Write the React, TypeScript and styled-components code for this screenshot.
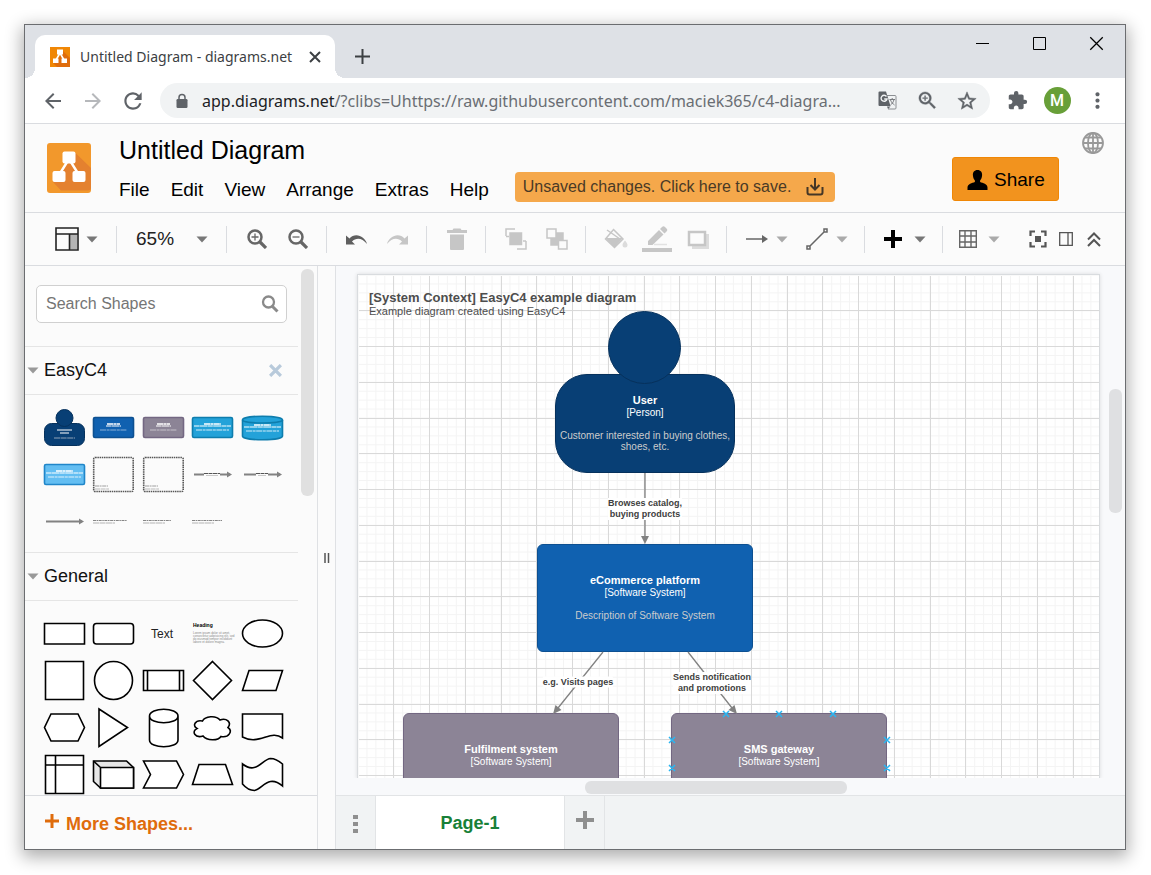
import React from 'react';
import styled, { createGlobalStyle } from 'styled-components';
import {
  MdArrowBack,
  MdArrowForward,
  MdRefresh,
  MdZoomIn,
  MdStarOutline,
  MdExtension,
  MdMoreVert,
} from 'react-icons/md';

const ui = '"Liberation Sans", Arial, sans-serif';
const chrome = '"Noto Sans", "Open Sans", sans-serif';

const GlobalStyle = createGlobalStyle`
  *, *::before, *::after { box-sizing: border-box; }
  body { margin: 0; background: #fff; font-family: ${ui}; color: #000; }
  button, input { font: inherit; color: inherit; }
  button { border: 0; padding: 0; background: none; cursor: pointer; }
  svg { display: block; flex: none; }
`;

/* ---------- browser window ---------- */

const Desktop = styled.div`
  display: flex;
  height: 100vh;
  min-height: 600px;
  padding: 24px 25px 25px 24px;
`;

const Window = styled.div`
  flex: 1;
  min-width: 0;
  display: flex;
  flex-direction: column;
  border: 1px solid #6b6d70;
  background: #fbfbfb;
  box-shadow: 0 5px 16px 2px rgba(0, 0, 0, 0.32);
`;

const TabStrip = styled.div`
  flex: none;
  display: flex;
  height: 53px;
  padding: 10px 0 0 10px;
  background: #dee1e6;
`;

const BrowserTab = styled.div`
  position: relative;
  display: flex;
  align-items: center;
  width: 300px;
  padding: 0 13px 0 15px;
  border-radius: 10px 10px 0 0;
  background: #fff;
  font: 14px/20px ${chrome};
  color: #3c4043;

  &::before,
  &::after {
    content: '';
    position: absolute;
    bottom: 0;
    width: 10px;
    height: 10px;
  }
  &::before {
    right: 100%;
    background: radial-gradient(circle at 0 0, transparent 10px, #fff 10px);
  }
  &::after {
    left: 100%;
    background: radial-gradient(circle at 100% 0, transparent 10px, #fff 10px);
  }
`;

const TabTitle = styled.span`
  flex: 1;
  margin-left: 10px;
  white-space: nowrap;
`;

const GlyphButton = styled.button`
  display: grid;
  place-items: center;
  width: 15px;
  height: 20px;
`;

const NewTab = styled(GlyphButton)`
  width: 30px;
  height: 43px;
  margin-left: 12px;
`;

const Caption = styled.div`
  display: flex;
  margin: -10px 0 0 auto;
`;

const CaptionButton = styled(GlyphButton)`
  width: 57px;
  height: 37px;
`;

const AddressBar = styled.div`
  flex: none;
  display: flex;
  align-items: center;
  gap: 7px;
  height: 46px;
  padding: 0 8px;
  border-bottom: 1px solid #dadce0;
  background: #fff;
  color: #5f6368;
`;

const ButtonRow = styled.div`
  display: flex;
  align-items: center;
`;

const NavButton = styled.button<{ $dim?: boolean }>`
  display: grid;
  place-items: center;
  width: 40px;
  height: 35px;
  color: ${(p) => (p.$dim ? '#b6b8bb' : '#5f6368')};

  path[fill='none'][d^='M0 0h24'] {
    stroke: none;
  }
`;

const Omnibox = styled.div`
  flex: 1;
  min-width: 0;
  display: flex;
  align-items: center;
  height: 35px;
  padding: 0 3px 0 16px;
  border-radius: 18px;
  background: #f1f3f4;
`;

const Url = styled.div`
  flex: 1;
  min-width: 0;
  margin-left: 14px;
  overflow: hidden;
  text-overflow: ellipsis;
  white-space: nowrap;
  font: 16px/24px ${chrome};
  color: #6a6e73;

  b {
    font-weight: 400;
    color: #202124;
  }
`;

const Avatar = styled.span`
  display: grid;
  place-items: center;
  width: 27px;
  height: 27px;
  border-radius: 50%;
  background: #689f38;
  color: #fff;
  font: 500 16px/27px Roboto, sans-serif;
`;

/* ---------- application header ---------- */

const Header = styled.header`
  flex: none;
  display: flex;
  align-items: flex-start;
  height: 89px;
  padding: 0 21px 0 22px;
  border-bottom: 1px solid #dadce0;
`;

const LogoLink = styled.a`
  margin: 19px 28px 0 0;
`;

const HeaderMain = styled.div`
  display: flex;
  flex-direction: column;
  gap: 7px;
  padding-top: 11px;
`;

const DocTitle = styled.h1`
  margin: 0;
  font-size: 25px;
  font-weight: 400;
  line-height: 30px;
`;

const MenuRow = styled.div`
  display: flex;
  align-items: flex-start;
  gap: 26px;
`;

const Menu = styled.nav`
  display: flex;
  gap: 21px;
  padding-top: 4px;
`;

const MenuButton = styled.button`
  font-size: 19px;
  line-height: 28px;
`;

const SaveNotice = styled.button`
  display: flex;
  align-items: center;
  justify-content: space-between;
  width: 320px;
  height: 30px;
  padding: 0 11px 0 8px;
  border-radius: 4px;
  background: #f5a84b;
  color: #4a3a26;
  font-size: 16px;
  line-height: 30px;
  white-space: nowrap;
`;

const ShareButton = styled.button`
  display: flex;
  align-items: center;
  gap: 6px;
  width: 107px;
  height: 44px;
  margin: 33px 23px 0 auto;
  padding: 1px 14px 0;
  border: 1px solid #f08705;
  border-radius: 3px;
  background: #f2931e;
  font-size: 19px;
`;

const LanguageButton = styled.button`
  margin-top: 8px;
`;

/* ---------- toolbar ---------- */

const Toolbar = styled.div`
  flex: none;
  display: flex;
  align-items: center;
  height: 53px;
  padding: 0 17px 0 20px;
  border-bottom: 1px solid #dadce0;
`;

const ToolButton = styled.button`
  display: grid;
  place-items: center;
  width: 41px;
  height: 36px;
`;

const DropButton = styled.button`
  display: flex;
  align-items: center;
  justify-content: space-between;
  width: 60px;
  height: 36px;
  padding: 0 8px 0 10px;
`;

const FormatButton = styled(DropButton)`
  width: 63px;
  padding-right: 10px;
`;

const ZoomSelect = styled(DropButton)`
  width: 92px;
  padding-right: 10px;
  font-size: 19px;
  color: #222;
`;

const TableButton = styled(DropButton)`
  width: 56px;
  padding-left: 7px;
`;

const Divider = styled.span`
  width: 1px;
  height: 27px;
  margin: 0 9px 0 8px;
  background: #dadce0;
`;

const ViewTools = styled.div`
  display: flex;
  margin-left: auto;
`;

const ViewButton = styled(ToolButton)`
  width: 28px;
`;

/* ---------- workspace ---------- */

const Workspace = styled.div`
  flex: 1;
  min-height: 0;
  display: flex;
`;

const Sidebar = styled.aside`
  flex: none;
  display: flex;
  flex-direction: column;
  width: 293px;
  border-right: 1px solid #dfe1e4;
`;

const SidebarScroll = styled.div`
  flex: 1;
  min-height: 0;
  display: flex;
  overflow: hidden;
`;

const Library = styled.div`
  width: 273px;
`;

const SearchBox = styled.label`
  display: flex;
  align-items: center;
  height: 38px;
  margin: 19px 11px 23px;
  padding: 0 7px 0 9px;
  border: 1px solid #d0d0d0;
  border-radius: 5px;
  background: #fff;
`;

const SearchInput = styled.input`
  flex: 1;
  min-width: 0;
  padding: 0;
  border: 0;
  outline: 0;
  background: none;
  font-size: 16px;

  &::placeholder {
    color: #757575;
    opacity: 1;
  }
`;

const SectionHeader = styled.div`
  display: flex;
  align-items: center;
  justify-content: space-between;
  height: 49px;
  padding: 0 15px 0 2px;
  border: solid #e5e5e5;
  border-width: 1px 0;
`;

const SectionToggle = styled.button`
  display: flex;
  align-items: center;
  gap: 5px;
  font-size: 18px;
  color: #111;
`;

const Palette = styled.div`
  display: grid;
  grid-template-columns: repeat(5, 1fr);
  grid-auto-rows: 47px;
  padding: 9px 11px 7px 15px;
`;

const ShapeButton = styled.button`
  display: flex;
  font-size: 12px;
`;

const SideThumb = styled.div`
  width: 13px;
  height: 227px;
  margin: 3px 0 0 3px;
  border-radius: 6px;
  background: #e0e0e0;
`;

const MoreShapes = styled.button`
  display: flex;
  align-items: center;
  gap: 7px;
  height: 54px;
  padding: 3px 0 0 20px;
  border-top: 1px solid #dadce0;
  color: #df6c0c;
  font-size: 18px;
  font-weight: 700;

  svg {
    margin-bottom: 7px;
  }
`;

const Splitter = styled.div`
  flex: none;
  display: grid;
  place-items: center;
  width: 18px;
  border-right: 1px solid #dfe1e4;
`;

const Editor = styled.main`
  flex: 1;
  min-width: 0;
  display: flex;
  flex-direction: column;
`;

const Stage = styled.div`
  flex: 1;
  min-height: 0;
  display: grid;
  grid-template: minmax(0, 1fr) 17px / minmax(0, 1fr) 19px;
  background: #f8f9fb;
`;

const Viewport = styled.div`
  display: flex;
  overflow: hidden;
  padding: 9px 7px 0 22px;
`;

const Paper = styled.div`
  position: relative;
  flex: 1;
  overflow: hidden;
  background: #fff;
`;

const PaperEdge = styled.div`
  flex: 1;
  display: flex;
  box-shadow: 0 0 0 1px #d9dcdf, 0 0 4px 1px rgba(0, 0, 0, 0.12);
`;

const VerticalThumb = styled.div`
  width: 13px;
  height: 124px;
  margin: 123px 0 0 3px;
  border-radius: 6px;
  background: #dfe0e2;
`;

const HorizontalThumb = styled.div`
  width: 34%;
  height: 13px;
  margin: 3px 0 0 calc(32% + 3px);
  border-radius: 6px;
  background: #dfe0e2;
`;

const PageBar = styled.div`
  flex: none;
  display: flex;
  height: 54px;
  border-top: 1px solid #e2e4e6;
  background: #f1f3f4;
`;

const PageBarButton = styled.button`
  display: grid;
  place-items: center;
  width: 40px;
  padding-top: 3px;
  border-right: 1px solid #e2e4e6;
`;

const AddPage = styled(PageBarButton)`
  padding: 0 0 6px;
`;

const PageTab = styled.button`
  width: 189px;
  padding-top: 2px;
  border-right: 1px solid #e2e4e6;
  background: #fff;
  color: #188038;
  font-size: 18px;
  font-weight: 700;
`;

/* ---------- diagram ---------- */

const Drawing = styled.svg`
  position: absolute;
  inset: 0;
  width: 100%;
  height: 100%;
`;

type NodeProps = { $x: number; $y: number; $fill: string; $line: string; $person?: boolean };

const Node = styled.div<NodeProps>`
  position: absolute;
  left: ${(p) => p.$x}px;
  top: ${(p) => p.$y}px;
  width: ${(p) => (p.$person ? 180 : 216)}px;
  height: ${(p) => (p.$person ? 99 : 108)}px;
  padding-top: ${(p) => (p.$person ? 19 : 29)}px;
  display: flex;
  flex-direction: column;
  border: 1px solid ${(p) => p.$line};
  border-radius: ${(p) => (p.$person ? 32 : 6)}px;
  background: ${(p) => p.$fill};
  color: #fff;
  font-size: 10px;
  line-height: 12px;
  text-align: center;
`;

const PersonHead = styled.div`
  position: absolute;
  left: 250px;
  top: 36px;
  width: 73px;
  height: 73px;
  border: 1px solid #06315c;
  border-radius: 50%;
  background: #083f75;
`;

const NodeName = styled.strong`
  font-size: 11px;
  line-height: 13px;
`;

const NodeText = styled.span`
  margin-top: 11px;
  line-height: 11px;
  color: #ccc;
`;

const EdgeLabel = styled.div<{ $x: number; $y: number }>`
  position: absolute;
  left: ${(p) => p.$x}px;
  top: ${(p) => p.$y}px;
  transform: translate(-50%, -50%);
  background: #fff;
  color: #404040;
  font-size: 9px;
  font-weight: 700;
  line-height: 11px;
  text-align: center;
  white-space: nowrap;
`;

const DiagramTitle = styled.div`
  position: absolute;
  left: 11px;
  top: 15px;
  color: #4d4d4d;
  font-size: 11px;
  line-height: 13px;

  strong {
    display: block;
    font-size: 13px;
    line-height: 15px;
  }
`;

/* ---------- icons ---------- */

const Caret = ({ color = '#777' }: { color?: string }) => (
  <svg width="12" height="7" viewBox="0 0 12 7">
    <path d="M.5.5h11L6 6.5z" fill={color} />
  </svg>
);

const Cross = ({ size, width, color }: { size: number; width: number; color: string }) => (
  <svg width={size} height={size} viewBox="0 0 12 12">
    <path d="M1 1l10 10M11 1L1 11" stroke={color} strokeWidth={width} />
  </svg>
);

const Plus = ({ size, width, color }: { size: number; width: number; color: string }) => (
  <svg width={size} height={size} viewBox={`0 0 ${size} ${size}`}>
    <path d={`M0 ${size / 2}h${size}M${size / 2} 0v${size}`} stroke={color} strokeWidth={width} />
  </svg>
);

const Favicon = () => (
  <svg width="20" height="20" viewBox="0 0 20 20">
    <path fill="#f08705" d="M0 0h20v20H0z" />
    <path fill="#df6c0c" d="M12 3l8 8v9H7l-4-4 7-7z" />
    <path d="M10 6L6 13M10 6l4 7" stroke="#fff" strokeWidth="1.6" />
    <path fill="#fff" d="M7 2.500h6v5H7zM3 11.500h5.500v4.500H3zM11.500 11.500H17v4.500h-5.500z" />
  </svg>
);

const Lock = () => (
  <svg width="12" height="16" viewBox="0 0 12 16">
    <rect x=".5" y="6" width="11" height="9" rx="1.200" fill="#5f6368" />
    <path d="M3 7V4.500a3 3 0 0 1 6 0V7" fill="none" stroke="#5f6368" strokeWidth="1.500" />
  </svg>
);

const Translate = () => (
  <svg width="19" height="19" viewBox="0 0 19 19" fill="none">
    <path d="M8 4.500h9a1 1 0 0 1 1 1V17a1 1 0 0 1-1 1H10" stroke="#8b8e92" />
    <path d="M1.500.500h6.500L12.500 15h-11a1 1 0 0 1-1-1V1.500a1 1 0 0 1 1-1z" fill="#5f6368" />
    <path d="M9 15.500h3.500L10 18z" fill="#5f6368" />
    <path d="M8.500 5.500A3 3 0 1 0 9 8H6.200" stroke="#f1f3f4" strokeWidth="1.400" />
    <path d="M11.500 8.500h5.500M14.200 7v1.500M16 8.500c-.5 2.500-2 4.500-3.500 5.500M12.500 9c1 2.500 2.500 4 4 5" stroke="#77797d" />
  </svg>
);

const Logo = () => (
  <svg width="44" height="50" viewBox="0 0 44 50">
    <rect width="44" height="50" rx="3" fill="#f2982c" />
    <path fill="#e4812f" d="M28 9.500l16 15.500v19.500a3 3 0 0 1-3 3H14L6 39l12-16z" />
    <path d="M22 16L12 32M22 16l10 16" stroke="#fff" strokeWidth="2.400" />
    <rect x="15.500" y="8.500" width="13" height="12" rx="2" fill="#fff" />
    <rect x="5.500" y="28" width="13" height="11" rx="2" fill="#fff" />
    <rect x="25.500" y="28" width="13" height="11" rx="2" fill="#fff" />
  </svg>
);

const Download = () => (
  <svg width="18" height="18" viewBox="0 0 18 18" fill="none" stroke="#453626" strokeWidth="2">
    <path d="M1.500 9v5.500a2 2 0 0 0 2 2h11a2 2 0 0 0 2-2V9M9 0v11M4.500 7L9 11.500 13.500 7" />
  </svg>
);

const Person = () => (
  <svg width="21" height="20" viewBox="0 0 21 20">
    <path d="M10.500 0c3.200 0 4.800 2.300 4.600 5.200-.2 2.500-1 4.200-2 5.300v1.600c2.800 1.200 7.400 1.900 7.400 5.400V20H.5v-2.500c0-3.500 4.600-4.200 7.400-5.400v-1.600c-1-1.100-1.800-2.800-2-5.300C5.700 2.300 7.300 0 10.500 0z" />
  </svg>
);

const Globe = () => (
  <svg width="22" height="22" viewBox="0 0 22 22" fill="none" stroke="#999" strokeWidth="1.800">
    <circle cx="11" cy="11" r="10" />
    <ellipse cx="11" cy="11" rx="5" ry="10" />
    <path d="M11 1v20M1 11h20M3 5.500h16M3 16.500h16" />
  </svg>
);

const FormatPanel = () => (
  <svg width="24" height="24" viewBox="0 0 24 24">
    <path fill="#b5b5b5" d="M15 7h7v15h-7z" />
    <path d="M1 1h22v22H1zM1 7h22M14.500 7v16" fill="none" stroke="#222" strokeWidth="1.600" />
  </svg>
);

const Lens = ({ plus }: { plus?: boolean }) => (
  <svg width="20" height="20" viewBox="0 0 20 20" fill="none" stroke="#666">
    <circle cx="8" cy="8" r="6.500" strokeWidth="2.500" />
    <path d="M13 13l6 6" strokeWidth="3.200" />
    <path d={plus ? 'M4.500 8h7M8 4.500v7' : 'M4.500 8h7'} strokeWidth="1.300" />
  </svg>
);

const Turn = ({ forward, color }: { forward?: boolean; color: string }) => (
  <svg width="21" height="11" viewBox="0 0 21 11">
    <path
      fill={color}
      d={
        forward
          ? 'M21 1.500V10.500h-9L15 7.500C11 3.500 5 3.500 0 10 2 2 12-2 17.500 4.500z'
          : 'M0 1.500V10.500h9L6 7.500C10 3.500 16 3.500 21 10 19 2 9-2 3.500 4.500z'
      }
    />
  </svg>
);

const Trash = () => (
  <svg width="20" height="22" viewBox="0 0 20 22" fill="#c6c6c6">
    <path d="M0 2h5.500l1-1.500h7l1 1.500H20v3H0zM3 6.500h14V21a1 1 0 0 1-1 1H4a1 1 0 0 1-1-1z" />
  </svg>
);

const ToFront = () => (
  <svg width="22" height="22" viewBox="0 0 22 22" fill="none" stroke="#c6c6c6" strokeWidth="1.500">
    <path fill="#c6c6c6" d="M5 5h11.500v11.500H5z" />
    <path d="M1 8V1h9M21 13v8h-9M21 13h-3M1 8.500h3" />
  </svg>
);

const ToBack = () => (
  <svg width="22" height="22" viewBox="0 0 22 22" stroke="#c6c6c6" strokeWidth="1.500">
    <path fill="#c6c6c6" d="M5 5h12v12H5z" />
    <path fill="#fbfbfb" d="M1 1h9v9H1zM12.500 12.500h8.500V21h-8.500z" />
  </svg>
);

const FillIcon = () => (
  <svg width="24" height="22" viewBox="0 0 24 22" fill="#c6c6c6">
    <path d="M3 2l13 9" stroke="#c6c6c6" strokeWidth="1.500" />
    <path d="M9.500 1.500l9.500 9.500-8.500 8.500L1.500 11z" fill="none" stroke="#c6c6c6" strokeWidth="1.500" />
    <path d="M1.500 10h17.500l-8.500 9.500z" />
    <path d="M21 12.500c1.500 2 2.500 3 2.500 4.500a2.500 2.500 0 0 1-5 0c0-1.500 1-2.500 2.500-4.500z" fill="#dcdcdc" />
  </svg>
);

const PenIcon = () => (
  <svg width="30" height="28" viewBox="0 0 30 28" fill="#c6c6c6">
    <path d="M6 20v-4L17 5l4.500 4.500L10.500 20zM18 4l2-2c1-1 2-1 3 0l1.500 1.500c1 1 1 2 0 3l-2 2z" />
    <path d="M12 19.500h13" stroke="#e2e2e2" strokeWidth="1.500" />
    <path d="M0 23h30v4H0z" />
  </svg>
);

const ShadowIcon = () => (
  <svg width="22" height="19" viewBox="0 0 22 19">
    <path fill="#dcdcdc" d="M5 4h17v15H5z" />
    <path fill="#fbfbfb" stroke="#c6c6c6" strokeWidth="2.500" d="M2 2h16v13H2z" />
  </svg>
);

const ArrowIcon = () => (
  <svg width="22" height="10" viewBox="0 0 22 10">
    <path d="M0 5h18" stroke="#666" strokeWidth="1.500" />
    <path fill="#666" d="M16 1l6 4-6 4z" />
  </svg>
);

const WaypointIcon = () => (
  <svg width="22" height="22" viewBox="0 0 22 22" fill="none" stroke="#666" strokeWidth="1.500">
    <path d="M1 18h3v3H1zM18 1h3v3h-3zM4 18L18 4" />
  </svg>
);

const GridIcon = () => (
  <svg width="18" height="18" viewBox="0 0 18 18" fill="none" stroke="#666" strokeWidth="1.400">
    <path d="M.7.700h16.600v16.600H.7zM6 .7v16.600M12 .7v16.600M.7 6h16.600M.7 12h16.600" />
  </svg>
);

const FitIcon = () => (
  <svg width="18" height="18" viewBox="0 0 18 18" fill="none" stroke="#555" strokeWidth="2.200">
    <path d="M1.500 6V1.500H6M12 1.500h4.500V6M16.500 12v4.500H12M6 16.500H1.500V12" />
    <path fill="#555" stroke="none" d="M6 6h6v6H6z" />
  </svg>
);

const PanelIcon = () => (
  <svg width="14" height="14" viewBox="0 0 14 14" fill="none" stroke="#555" strokeWidth="1.300">
    <path d="M.7.700h12.600v12.600H.7zM9 .7v12.600" />
  </svg>
);

const CollapseIcon = () => (
  <svg width="14" height="15" viewBox="0 0 14 15" fill="none" stroke="#555" strokeWidth="2">
    <path d="M1 7.500l6-6 6 6M1 14l6-6 6 6" />
  </svg>
);

/* ---------- palette shapes ---------- */

const Shape = ({ label, children }: { label: string; children: React.ReactNode }) => (
  <ShapeButton aria-label={label}>
    <svg width="49" height="47" viewBox="0 0 49 47">
      {children}
    </svg>
  </ShapeButton>
);

const Outline = ({ d, fill = '#fff' }: { d: string; fill?: string }) => (
  <path d={d} fill={fill} stroke="#000" strokeWidth="1.600" />
);

/* Scaled-down captions: too small to read, drawn as broken strokes. */
const MiniCaption = ({ wide }: { wide?: boolean }) => (
  <g stroke="#fff">
    <path d={wide ? 'M16 20h17' : 'M18 20h13'} strokeWidth="1.300" strokeDasharray="6 .4 3 .4" />
    <path d={wide ? 'M6 22h37' : 'M17 22h15'} strokeWidth="1.200" strokeDasharray="5 .4 8 .4" />
    <path d={wide ? 'M8 26h33' : 'M11 26h27'} strokeWidth="1.100" strokeDasharray="6 .6 3 .6" opacity={wide ? 0.8 : 0.5} />
  </g>
);

type MiniBoxProps = { label: string; fill: string; line: string; wide?: boolean };

const MiniBox = ({ label, fill, line, wide }: MiniBoxProps) => (
  <Shape label={label}>
    <rect x="4.500" y="13.500" width="40" height="20" rx="1.500" fill={fill} stroke={line} strokeWidth="1.600" />
    <MiniCaption wide={wide} />
  </Shape>
);

const MiniScope = ({ label }: { label: string }) => (
  <Shape label={label}>
    <rect x="4.700" y="6.500" width="39.500" height="34" rx="1.500" fill="none" stroke="#555" strokeWidth="1.600" strokeDasharray="1.500 .7" />
    <path d="M6 35h13" stroke="#888" strokeWidth=".8" strokeDasharray="4 .6 2 .6" />
    <path d="M6 38h14" stroke="#aaa" strokeWidth=".8" strokeDasharray="5 .6" />
  </Shape>
);

const MiniArrow = ({ label, caption }: { label: string; caption?: number }) => (
  <Shape label={label}>
    <path d="M6 23.500h36" stroke="#828282" strokeWidth="1.800" />
    <path d="M39 20.500l5 3-5 3z" fill="#828282" />
    {caption && (
      <>
        <path d={`M${24 - caption} 23.500h${caption * 2}`} stroke="#fbfbfb" strokeWidth="3" />
        <path d={`M${24 - caption} 22.500h${caption * 2}`} stroke="#555" strokeWidth="1.200" strokeDasharray="4 .5" />
        <path d={`M${26 - caption} 24.500h${caption * 2 - 4}`} stroke="#bbb" strokeWidth=".8" />
      </>
    )}
  </Shape>
);

const MiniTitle = ({ label, width }: { label: string; width: number }) => (
  <Shape label={label}>
    <path d={`M4 22.500h${width}`} stroke="#777" strokeWidth=".9" strokeDasharray="3 .6 1.500 .6" />
    <path d="M4 25h22" stroke="#aaa" strokeWidth=".9" strokeDasharray="6 .5" />
  </Shape>
);

const MiniPerson = () => (
  <Shape label="Person">
    <rect x="4.500" y="19.500" width="40" height="22" rx="7" fill="#083f75" stroke="#06315c" />
    <circle cx="24.500" cy="14" r="8.500" fill="#083f75" stroke="#06315c" />
    <path d="M17 26h15M20 29h9" stroke="#fff" strokeWidth="1.200" />
    <path d="M14 34h21" stroke="#8fa3b8" strokeWidth="1" strokeDasharray="6 .6" />
  </Shape>
);

const MiniDatabase = () => (
  <Shape label="Database">
    <path d="M4.500 16v16c0 5 40 5 40 0V16c0-5-40-5-40 0z" fill="#23a2d9" stroke="#0e7dad" strokeWidth="1.600" />
    <path d="M4.500 16c0 4 40 4 40 0" fill="none" stroke="#0e7dad" strokeWidth="1.600" />
    <g transform="translate(0 1)">
      <MiniCaption wide />
    </g>
  </Shape>
);

const EasyC4Shapes = () => (
  <Palette>
    <MiniPerson />
    <MiniBox label="Software system" fill="#1061b0" line="#0d5091" />
    <MiniBox label="External system" fill="#8c8496" line="#736782" />
    <MiniBox label="Container" fill="#23a2d9" line="#0e7dad" wide />
    <MiniDatabase />
    <MiniBox label="Component" fill="#63bef2" line="#2086c9" wide />
    <MiniScope label="System scope" />
    <MiniScope label="Container scope" />
    <MiniArrow label="Relationship" caption={8} />
    <MiniArrow label="Short relationship" caption={6} />
    <MiniArrow label="Plain relationship" />
    <MiniTitle label="Context title" width={34} />
    <MiniTitle label="Container title" width={28} />
    <MiniTitle label="Component title" width={30} />
  </Palette>
);

const GeneralShapes = () => (
  <Palette>
    <Shape label="Rectangle"><Outline d="M4.500 13.500h40v20.500h-40z" /></Shape>
    <Shape label="Rounded rectangle">
      <rect x="4.500" y="13.500" width="40" height="20.500" rx="3" fill="#fff" stroke="#000" strokeWidth="1.600" />
    </Shape>
    <Shape label="Text"><text x="23" y="28" textAnchor="middle" fontSize="12" fill="#222">Text</text></Shape>
    <Shape label="Heading">
      <text x="5" y="17" fontSize="5" fontWeight="700">Heading</text>
      <text fontSize="3" fill="#888">
        <tspan x="5" y="24">Lorem ipsum dolor sit amet,</tspan>
        <tspan x="5" y="27">consectetur adipisicing elit, sed</tspan>
        <tspan x="5" y="30">do eiusmod tempor incididunt</tspan>
        <tspan x="5" y="33">labore et dolore magna.</tspan>
      </text>
    </Shape>
    <Shape label="Ellipse"><Outline d="M4.500 23.500a20 13.500 0 0 1 40 0 20 13.500 0 0 1-40 0z" /></Shape>

    <Shape label="Square"><Outline d="M5.500 4.500h38v38h-38z" /></Shape>
    <Shape label="Circle"><Outline d="M5.500 23.500a19 19 0 0 1 38 0 19 19 0 0 1-38 0z" /></Shape>
    <Shape label="Process"><Outline d="M4.500 13.500h40v20h-40zM8.500 13.500v20M40.500 13.500v20" /></Shape>
    <Shape label="Diamond"><Outline d="M24.500 4.500l19 19-19 19-19-19z" /></Shape>
    <Shape label="Parallelogram"><Outline d="M11 13.500h33.500L38 33.500H4.500z" /></Shape>

    <Shape label="Hexagon"><Outline d="M11 10h27l6.500 13.500L38 37H11L4.500 23.500z" /></Shape>
    <Shape label="Triangle"><Outline d="M10 5l28.500 18.500L10 42.500z" /></Shape>
    <Shape label="Cylinder">
      <Outline d="M10.500 12v24c0 9 28.500 9 28.500 0V12c0-9-28.500-9-28.500 0zM10.500 12c0 9 28.500 9 28.500 0" />
    </Shape>
    <Shape label="Cloud">
      <Outline d="M14.500 17C7 15.500 4 22 9 24.500c-6 3-2 10 6 7.500 4 5 15 5 18 .5 8 1.500 12-5.500 7-9 4-5-1.500-10-8-7.500-4-5-15-4-17.500 1z" />
    </Shape>
    <Shape label="Document"><Outline d="M4.500 10h40v24c-12-9-23 8-40-1z" /></Shape>

    <Shape label="Internal storage"><Outline d="M5.500 4.500h38v38h-38zM15.500 4.500v38M5.500 14h38" /></Shape>
    <Shape label="Cube">
      <Outline d="M4.500 10h33l7 6.500V37h-33l-7-6.500z" fill="#e6e6e6" />
      <Outline d="M11.500 16.500h33V37h-33zM4.500 10l7 6.500" />
    </Shape>
    <Shape label="Step"><Outline d="M4.500 10h33l7 13.500-7 13.500h-33l7-13.500z" /></Shape>
    <Shape label="Trapezoid"><Outline d="M11 13.500h26.500l7 20h-40z" /></Shape>
    <Shape label="Tape"><Outline d="M4.500 13c14 11 20-5 28-5.500 5 0 8 2 12 5.500v22c-14-12-20 3-28 4.500-5 0-9-3-12-6.500z" /></Shape>
  </Palette>
);

/* ---------- diagram drawing ---------- */

const GRID = 35.75;
const major = Array.from({ length: 80 }, (_, k) => Math.round(GRID * (k + 1) - 0.5) + 0.5);
const minor = Array.from({ length: 320 }, (_, k) => (k * GRID) / 4);

const GridLines = () => (
  <Drawing>
    <path stroke="#f4f4f4" d={minor.map((p) => `M${p} 1v3000M1 ${p}h3000`).join('')} />
    <path stroke="#d9d9d9" d={major.map((p) => `M${p} 1v3000M1 ${p}h3000`).join('')} />
  </Drawing>
);

const Edges = () => (
  <Drawing>
    <g stroke="#828282" strokeWidth="1.300">
      <path d="M287 198v66M245 377l-45 56M330 377l44 56" />
    </g>
    <g fill="#828282">
      <path d="M287 269l-4-8h8zM195 439l2.500-9 6 5zM379 439l-2.500-9-6 5z" />
    </g>
  </Drawing>
);

const anchors = [
  [368, 439], [421, 439], [475, 439],
  [314, 465], [529, 465], [314, 493], [529, 493],
];

const Anchors = () => (
  <Drawing>
    <path
      stroke="#29b6f2"
      strokeWidth="1.500"
      d={anchors.map(([x, y]) => `M${x - 3} ${y - 3}l6 6M${x + 3} ${y - 3}l-6 6`).join('')}
    />
  </Drawing>
);

const Diagram = () => (
  <Paper>
    <GridLines />
    <DiagramTitle>
      <strong>[System Context] EasyC4 example diagram</strong>
      Example diagram created using EasyC4
    </DiagramTitle>
    <Node $person $x={197} $y={99} $fill="#083f75" $line="#06315c">
      <NodeName>User</NodeName>
      [Person]
      <NodeText>Customer interested in buying clothes, shoes, etc.</NodeText>
    </Node>
    <PersonHead />
    <Node $x={179} $y={269} $fill="#1061b0" $line="#0d5091">
      <NodeName>eCommerce platform</NodeName>
      [Software System]
      <NodeText>Description of Software System</NodeText>
    </Node>
    <Node $x={45} $y={438} $fill="#8c8496" $line="#736782">
      <NodeName>Fulfilment system</NodeName>
      [Software System]
    </Node>
    <Node $x={313} $y={438} $fill="#8c8496" $line="#736782">
      <NodeName>SMS gateway</NodeName>
      [Software System]
    </Node>
    <Edges />
    <EdgeLabel $x={287} $y={234}>Browses catalog,<br />buying products</EdgeLabel>
    <EdgeLabel $x={220} $y={407}>e.g. Visits pages</EdgeLabel>
    <EdgeLabel $x={354} $y={408}>Sends notification<br />and promotions</EdgeLabel>
    <Anchors />
  </Paper>
);

/* ---------- page ---------- */

const menus = ['File', 'Edit', 'View', 'Arrange', 'Extras', 'Help'];

export default function App() {
  return (
    <>
      <GlobalStyle />
      <Desktop>
        <Window>
          <TabStrip>
            <BrowserTab>
              <Favicon />
              <TabTitle>Untitled Diagram - diagrams.net</TabTitle>
              <GlyphButton aria-label="Close tab"><Cross size={12} width={2} color="#3c4043" /></GlyphButton>
            </BrowserTab>
            <NewTab aria-label="New tab"><Plus size={15} width={2} color="#3c4043" /></NewTab>
            <Caption>
              <CaptionButton aria-label="Minimize">
                <svg width="13" height="13"><path d="M0 6.500h13" stroke="#000" /></svg>
              </CaptionButton>
              <CaptionButton aria-label="Maximize">
                <svg width="13" height="13"><path d="M.5.500h12v12H.5z" fill="none" stroke="#000" /></svg>
              </CaptionButton>
              <CaptionButton aria-label="Close"><Cross size={15} width={1} color="#000" /></CaptionButton>
            </Caption>
          </TabStrip>

          <AddressBar>
            <ButtonRow>
              <NavButton aria-label="Back"><MdArrowBack size={24} /></NavButton>
              <NavButton aria-label="Forward" $dim><MdArrowForward size={24} /></NavButton>
              <NavButton aria-label="Reload"><MdRefresh size={26} /></NavButton>
            </ButtonRow>
            <Omnibox>
              <Lock />
              <Url role="textbox" aria-label="Address">
                <b>app.diagrams.net</b>/?clibs=Uhttps://raw.githubusercontent.com/maciek365/c4-diagra...
              </Url>
              <NavButton aria-label="Translate"><Translate /></NavButton>
              <NavButton aria-label="Zoom">
                <MdZoomIn size={23} stroke="currentColor" strokeWidth="0.4" />
              </NavButton>
              <NavButton aria-label="Bookmark">
                <MdStarOutline size={22} stroke="currentColor" strokeWidth="0.5" />
              </NavButton>
            </Omnibox>
            <ButtonRow>
              <NavButton aria-label="Extensions"><MdExtension size={21} /></NavButton>
              <NavButton aria-label="Profile"><Avatar>M</Avatar></NavButton>
              <NavButton aria-label="Browser menu"><MdMoreVert size={25} /></NavButton>
            </ButtonRow>
          </AddressBar>

          <Header>
            <LogoLink href="#" aria-label="Home"><Logo /></LogoLink>
            <HeaderMain>
              <DocTitle>Untitled Diagram</DocTitle>
              <MenuRow>
                <Menu>
                  {menus.map((m) => <MenuButton key={m}>{m}</MenuButton>)}
                </Menu>
                <SaveNotice>Unsaved changes. Click here to save. <Download /></SaveNotice>
              </MenuRow>
            </HeaderMain>
            <ShareButton><Person />Share</ShareButton>
            <LanguageButton aria-label="Language"><Globe /></LanguageButton>
          </Header>

          <Toolbar>
            <FormatButton aria-label="View"><FormatPanel /><Caret /></FormatButton>
            <Divider />
            <ZoomSelect>65%<Caret /></ZoomSelect>
            <Divider />
            <ToolButton aria-label="Zoom in"><Lens plus /></ToolButton>
            <ToolButton aria-label="Zoom out"><Lens /></ToolButton>
            <Divider />
            <ToolButton aria-label="Undo"><Turn color="#5f5f5f" /></ToolButton>
            <ToolButton aria-label="Redo"><Turn forward color="#c6c6c6" /></ToolButton>
            <Divider />
            <ToolButton aria-label="Delete"><Trash /></ToolButton>
            <Divider />
            <ToolButton aria-label="To front"><ToFront /></ToolButton>
            <ToolButton aria-label="To back"><ToBack /></ToolButton>
            <Divider />
            <ToolButton aria-label="Fill color"><FillIcon /></ToolButton>
            <ToolButton aria-label="Line color"><PenIcon /></ToolButton>
            <ToolButton aria-label="Shadow"><ShadowIcon /></ToolButton>
            <Divider />
            <DropButton aria-label="Connection"><ArrowIcon /><Caret color="#aaa" /></DropButton>
            <DropButton aria-label="Waypoints"><WaypointIcon /><Caret color="#aaa" /></DropButton>
            <Divider />
            <DropButton aria-label="Insert"><Plus size={18} width={4} color="#000" /><Caret /></DropButton>
            <Divider />
            <TableButton aria-label="Table"><GridIcon /><Caret color="#aaa" /></TableButton>
            <ViewTools>
              <ViewButton aria-label="Fullscreen"><FitIcon /></ViewButton>
              <ViewButton aria-label="Format panel"><PanelIcon /></ViewButton>
              <ViewButton aria-label="Collapse"><CollapseIcon /></ViewButton>
            </ViewTools>
          </Toolbar>

          <Workspace>
            <Sidebar>
              <SidebarScroll>
                <Library>
                  <SearchBox>
                    <SearchInput aria-label="Search Shapes" placeholder="Search Shapes" />
                    <svg width="18" height="18" viewBox="0 0 18 18" fill="none" stroke="#8a8a8a">
                      <circle cx="7.500" cy="7" r="5.500" strokeWidth="2.300" />
                      <path d="M11 11l5.500 5.500" strokeWidth="3" />
                    </svg>
                  </SearchBox>
                  <SectionHeader>
                    <SectionToggle><Caret color="#999" />EasyC4</SectionToggle>
                    <GlyphButton aria-label="Close EasyC4"><Cross size={13} width={3} color="#b8cadb" /></GlyphButton>
                  </SectionHeader>
                  <EasyC4Shapes />
                  <SectionHeader>
                    <SectionToggle><Caret color="#999" />General</SectionToggle>
                  </SectionHeader>
                  <GeneralShapes />
                </Library>
                <SideThumb />
              </SidebarScroll>
              <MoreShapes><Plus size={14} width={3} color="#df6c0c" />More Shapes...</MoreShapes>
            </Sidebar>
            <Splitter>
              <svg width="6" height="10"><path d="M1 0v10M4.500 0v10" stroke="#555" strokeWidth="1.500" /></svg>
            </Splitter>
            <Editor>
              <Stage>
                <Viewport>
                  <PaperEdge><Diagram /></PaperEdge>
                </Viewport>
                <VerticalThumb />
                <HorizontalThumb />
              </Stage>
              <PageBar>
                <PageBarButton aria-label="Pages">
                  <svg width="5" height="19"><path d="M0 0h5v4H0zM0 7h5v4H0zM0 14h5v4H0z" fill="#8f8f8f" /></svg>
                </PageBarButton>
                <PageTab>Page-1</PageTab>
                <AddPage aria-label="Insert page"><Plus size={18} width={4} color="#8f8f8f" /></AddPage>
              </PageBar>
            </Editor>
          </Workspace>
        </Window>
      </Desktop>
    </>
  );
}
